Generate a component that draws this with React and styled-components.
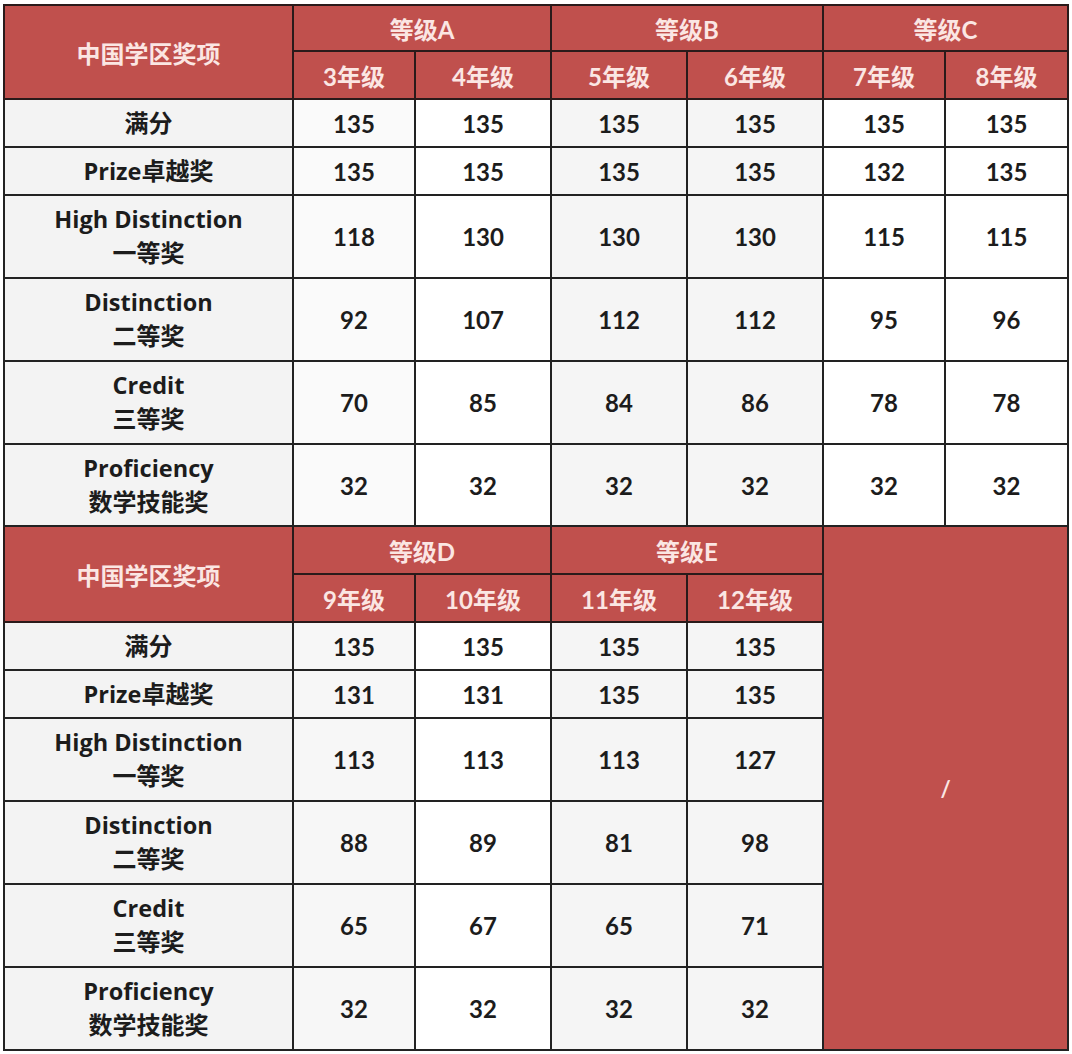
import React from "react";
import styled, { createGlobalStyle } from "styled-components";

const Global = createGlobalStyle`
  html, body { margin: 0; padding: 0; background: #ffffff; }
  body { font-family: "Lato", "Noto Sans CJK SC", sans-serif; }
`;

const Page = styled.div`
  padding: 4px 0 0 3px;
`;

const Table = styled.table`
  border-collapse: collapse;
  table-layout: fixed;
  width: 1064px;
  font-family: "Lato", "Noto Sans CJK SC", sans-serif;
  font-weight: 700;
  font-size: 24px;
  color: #1c1c1c;
`;

const Row = styled.tr`
  height: ${(p) => p.$h}px;
`;

const Head = styled.th`
  background: #c0504d;
  color: #fbe6e3;
  border: 2px solid #2a1a1a;
  font-weight: 700;
  font-size: 24px;
  text-align: center;
  vertical-align: middle;
  padding: 0;
`;

const Label = styled.td`
  background: #f3f3f3;
  border: 2px solid #222;
  text-align: center;
  vertical-align: middle;
  line-height: 33px;
  padding: 0;
  font-family: "Open Sans", "Noto Sans CJK SC", sans-serif;
  font-size: 23.5px;
`;

const Cjk = styled.span`
  font-size: 24px;
`;

const Cell = styled.td`
  background: ${(p) => p.$bg};
  border: 2px solid #222;
  text-align: center;
  vertical-align: middle;
  padding: 0;
`;

const Empty = styled.td`
  background: #c0504d;
  border: 2px solid #222;
  color: #fbe6e3;
  text-align: center;
  vertical-align: middle;
  font-size: 22px;
  padding: 0;
`;

const Line = styled.div``;

const widths = [289, 122, 136, 136, 136, 122, 123];

const labels = [
  [["", "满分"]],
  [["Prize", "卓越奖"]],
  [["High Distinction", ""], ["", "一等奖"]],
  [["Distinction", ""], ["", "二等奖"]],
  [["Credit", ""], ["", "三等奖"]],
  [["Proficiency", ""], ["", "数学技能奖"]],
];

const heights = [48, 48, 83, 83, 83, 82];
const heights2 = [48, 48, 83, 83, 83, 83];

const topData = [
  [135, 135, 135, 135, 135, 135],
  [135, 135, 135, 135, 132, 135],
  [118, 130, 130, 130, 115, 115],
  [92, 107, 112, 112, 95, 96],
  [70, 85, 84, 86, 78, 78],
  [32, 32, 32, 32, 32, 32],
];

const bottomData = [
  [135, 135, 135, 135],
  [131, 131, 135, 135],
  [113, 113, 113, 127],
  [88, 89, 81, 98],
  [65, 67, 65, 71],
  [32, 32, 32, 32],
];

const topBg = ["#fafafa", "#ffffff", "#f5f5f5", "#f5f5f5", "#ffffff", "#ffffff"];
const bottomBg = ["#f7f7f7", "#ffffff", "#f5f5f5", "#f5f5f5"];

function LabelCell({ lines }) {
  return (
    <Label>
      {lines.map(([latin, cjk], i) => (
        <Line key={i}>
          {latin}
          {cjk && <Cjk>{cjk}</Cjk>}
        </Line>
      ))}
    </Label>
  );
}

export default function App() {
  return (
    <Page>
      <Global />
      <Table>
        <colgroup>
          {widths.map((w, i) => (
            <col key={i} style={{ width: w }} />
          ))}
        </colgroup>
        <tbody>
          <Row $h={46}>
            <Head rowSpan={2}>中国学区奖项</Head>
            <Head colSpan={2}>等级A</Head>
            <Head colSpan={2}>等级B</Head>
            <Head colSpan={2}>等级C</Head>
          </Row>
          <Row $h={48}>
            {["3年级", "4年级", "5年级", "6年级", "7年级", "8年级"].map((g) => (
              <Head key={g}>{g}</Head>
            ))}
          </Row>
          {labels.map((lab, r) => (
            <Row key={"t" + r} $h={heights[r]}>
              <LabelCell lines={lab} />
              {topData[r].map((v, c) => (
                <Cell key={c} $bg={topBg[c]}>
                  {v}
                </Cell>
              ))}
            </Row>
          ))}
          <Row $h={48}>
            <Head rowSpan={2}>中国学区奖项</Head>
            <Head colSpan={2}>等级D</Head>
            <Head colSpan={2}>等级E</Head>
            <Empty colSpan={2} rowSpan={8}>
              /
            </Empty>
          </Row>
          <Row $h={48}>
            {["9年级", "10年级", "11年级", "12年级"].map((g) => (
              <Head key={g}>{g}</Head>
            ))}
          </Row>
          {labels.map((lab, r) => (
            <Row key={"b" + r} $h={heights2[r]}>
              <LabelCell lines={lab} />
              {bottomData[r].map((v, c) => (
                <Cell key={c} $bg={bottomBg[c]}>
                  {v}
                </Cell>
              ))}
            </Row>
          ))}
        </tbody>
      </Table>
    </Page>
  );
}
